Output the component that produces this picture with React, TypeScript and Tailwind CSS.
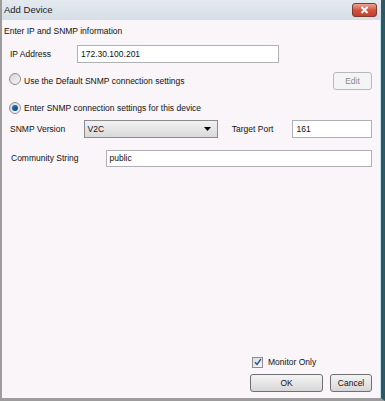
import React from "react";

const font = { fontFamily: '"Liberation Sans", Arial, sans-serif' };

function Radio({ checked }: { checked?: boolean }) {
  return (
    <span className="relative inline-flex h-[12px] w-[12px] items-center justify-center rounded-full border border-[#8e8f8f] bg-gradient-to-br from-[#d6d6d6] to-[#f6f6f6]">
      {checked && (
        <span className="h-[6px] w-[6px] rounded-full bg-gradient-to-br from-[#2b7fc8] to-[#0d3d6e]" />
      )}
    </span>
  );
}

export default function App() {
  return (
    <div
      className="flex h-[401px] w-[385px] flex-col overflow-hidden border-b-[3px] border-l-2 border-r-[4px] border-b-[#9c9c9c] border-l-[#9c9c9c] border-r-[#305862] bg-[#f9f5f9] text-[8.5px] text-[#111]"
      style={font}
    >
      <div className="flex h-[20px] shrink-0 items-center justify-between bg-gradient-to-b from-[#e4e9ef] to-[#d6dee6] pl-[2px] pr-[4px]">
        <span className="text-[9.5px] text-[#1b1b1b]">Add Device</span>
        <div className="flex h-[14px] w-[25px] items-center justify-center rounded-[3px] border border-[#7b3a32] bg-gradient-to-b from-[#e8a596] via-[#d2543f] to-[#c4402c]">
          <svg width="9" height="8" viewBox="0 0 9 8">
            <path d="M1.5 1 L7.5 7 M7.5 1 L1.5 7" stroke="#ffffff" strokeWidth="2" />
          </svg>
        </div>
      </div>
      <div className="flex flex-1 flex-col border-r border-r-[#bfe3f2] pl-[2px] pr-[8px]">
        <div className="mt-[6px] h-[10px] leading-[10px]">Enter IP and SNMP information</div>
        <div className="mt-[9px] flex h-[18px] items-center">
          <span className="ml-[6px] w-[67px]">IP Address</span>
          <div className="flex h-[18px] w-[202px] items-center border border-[#aeb0b5] bg-white pl-[3px]">172.30.100.201</div>
        </div>
        <div className="mt-[9px] flex h-[18px] items-center">
          <span className="ml-[5px]"><Radio /></span>
          <span className="ml-[3px] flex-1">Use the Default SNMP connection settings</span>
          <div className="flex h-[18px] w-[39px] items-center justify-center rounded-[3px] border border-[#b7babd] bg-[#f4f4f4] text-[#8a8a8a]">Edit</div>
        </div>
        <div className="mt-[9px] flex h-[18px] items-center">
          <span className="ml-[5px]"><Radio checked /></span>
          <span className="ml-[3px]">Enter SNMP connection settings for this device</span>
        </div>
        <div className="mt-[3px] flex h-[18px] items-center">
          <span className="ml-[6px] w-[74px]">SNMP Version</span>
          <div className="flex h-[18px] w-[135px] items-center justify-between border border-[#8c8c8c] bg-gradient-to-b from-[#f2f2f2] to-[#d9d9d9] pl-[3px] pr-[6px]">
            <span>V2C</span>
            <svg width="7" height="4" viewBox="0 0 7 4"><path d="M0 0 H7 L3.5 4 Z" fill="#000" /></svg>
          </div>
          <span className="ml-[14px] w-[61px]">Target Port</span>
          <div className="flex h-[18px] w-[80px] items-center border border-[#aeb0b5] bg-white pl-[3px]">161</div>
        </div>
        <div className="mt-[12px] flex h-[17px] items-center">
          <span className="ml-[7px] w-[96px]">Community String</span>
          <div className="flex h-[17px] w-[267px] items-center border border-[#aeb0b5] bg-white pl-[2px]">public</div>
        </div>
        <div className="flex-1" />
        <div className="flex h-[12px] items-center">
          <span className="ml-[248px] flex h-[11px] w-[11px] items-center justify-center border border-[#8e8f8f] bg-gradient-to-br from-[#dcdcdc] to-[#f8f8f8]">
            <svg width="8" height="8" viewBox="0 0 8 8"><path d="M1 4.2 L3 6.5 L7 1" stroke="#2a4f9a" strokeWidth="1.4" fill="none" /></svg>
          </span>
          <span className="ml-[5px]">Monitor Only</span>
        </div>
        <div className="mb-[6px] mt-[6px] flex h-[18px] items-center">
          <div className="ml-[246px] flex h-[18px] w-[75px] items-center justify-center rounded-[3px] border border-[#707070] bg-gradient-to-b from-[#f4f4f4] via-[#e6e6e6] to-[#d6d6d6]">OK</div>
          <div className="ml-[7px] flex h-[18px] w-[43px] items-center justify-center rounded-[3px] border border-[#707070] bg-gradient-to-b from-[#f4f4f4] via-[#e6e6e6] to-[#d6d6d6]">Cancel</div>
        </div>
      </div>
    </div>
  );
}
